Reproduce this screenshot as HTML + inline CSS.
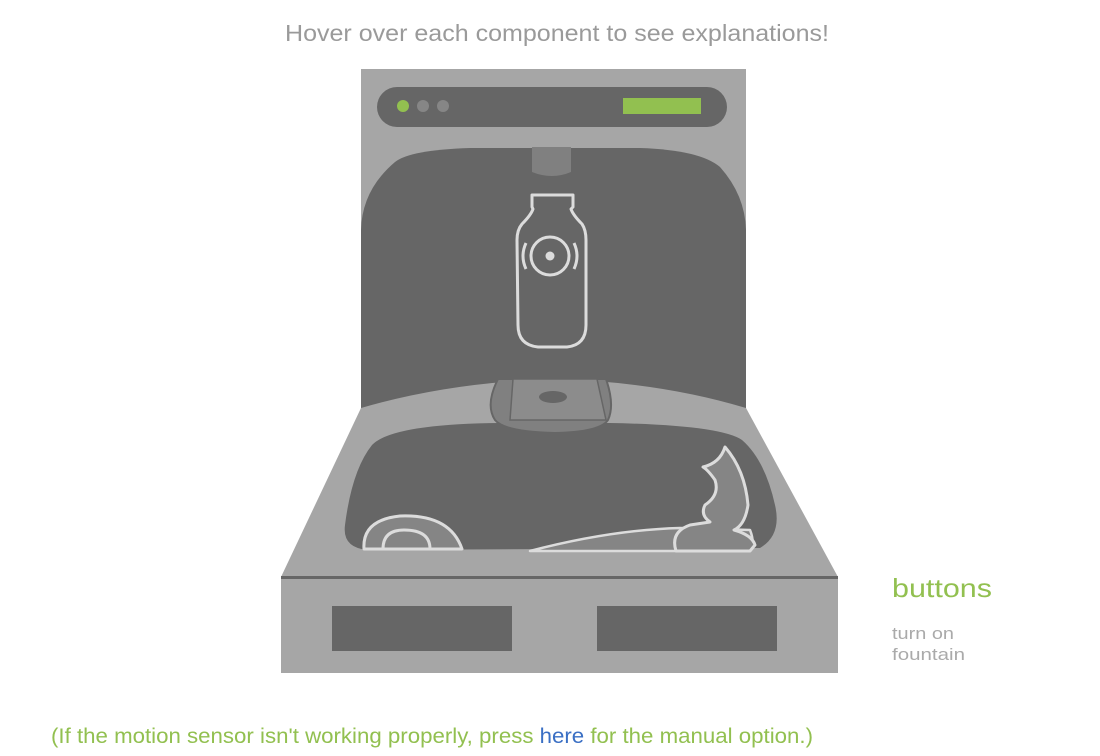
<!DOCTYPE html>
<html><head><meta charset="utf-8"><style>
html,body{margin:0;padding:0;background:#fff;width:1100px;height:756px;overflow:hidden}
svg{display:block}
text{font-family:"Liberation Sans",sans-serif}
</style></head><body>
<svg width="1100" height="756" viewBox="0 0 1100 756" xmlns="http://www.w3.org/2000/svg">
<text x="285" y="41" font-size="23" fill="#9a9a9a" textLength="544" lengthAdjust="spacingAndGlyphs">Hover over each component to see explanations!</text>
<rect x="361" y="69" width="385" height="345" fill="#a6a6a6"/>
<rect x="377" y="87" width="350" height="40" rx="20" fill="#666"/>
<circle cx="403" cy="106" r="6" fill="#92c050"/>
<circle cx="423" cy="106" r="6" fill="#868686"/>
<circle cx="443" cy="106" r="6" fill="#868686"/>
<rect x="623" y="98" width="78" height="16" fill="#92c050"/>
<path d="M361,412 L361,230 Q362,190 395,162 Q410,150 470,148 L640,148 Q700,150 720,167 Q745,195 746,230 L746,412 Z" fill="#666"/>
<path d="M532,147 L571,147 L571,172 Q552,180 532,172 Z" fill="#808080"/>
<g fill="none" stroke="#dcdcdc" stroke-width="3" stroke-linejoin="round">
<path d="M532,195 L573,195 L573,207 L571,209 Q573,215 582,224 Q586,230 586,240 L586,325 Q586,345 567,347 L538,347 Q518,345 518,325 L517,240 Q517,230 522,224 Q531,215 533,209 L532,207 Z"/>
<circle cx="550" cy="256" r="19"/>
<path d="M526,243 Q520,256 526,269"/>
<path d="M574,243 Q580,256 574,269"/>
</g>
<circle cx="550" cy="256" r="4.5" fill="#dcdcdc"/>
<path d="M361,408 Q450,382 555,379 Q660,382 746,408 L838,577 L281,577 Z" fill="#a6a6a6"/>
<path d="M368,550 Q342,548 345,525 Q352,470 372,445 Q392,424 500,423 L610,423 Q720,425 742,440 Q765,460 775,505 Q782,535 760,548 Z" fill="#666"/>
<path d="M498,379 L606,379 Q615,405 608,420 Q600,432 555,433 Q505,432 495,420 Q485,405 498,379 Z" fill="#808080" stroke="#666" stroke-width="2"/>
<path d="M513,379 L597,379 L606,420 L510,420 Z" fill="#8c8c8c" stroke="#666" stroke-width="1.5"/>
<ellipse cx="553" cy="397" rx="14" ry="6" fill="#666"/>
<g fill="#858585" stroke="#dcdcdc" stroke-width="3" stroke-linejoin="round">
<path d="M364,549 Q362,520 400,516 Q450,514 462,549 Z"/>
<path d="M383,549 Q383,530 404,530 Q430,530 430,549" fill="none"/>
<path d="M530,551 Q610,530 680,528 L750,530 Q757,548 745,551 Z" stroke-width="2.5"/>
<path d="M676,551 Q670,532 690,525 L710,522 Q700,515 705,505 Q720,495 715,480 Q708,470 703,467 Q720,463 725,447 Q745,470 748,505 Q745,525 734,530 Q752,535 755,545 L750,551 Z"/>
</g>
<rect x="281" y="576" width="557" height="3" fill="#666"/>
<rect x="281" y="579" width="557" height="94" fill="#a6a6a6"/>
<rect x="332" y="606" width="180" height="45" fill="#666"/>
<rect x="597" y="606" width="180" height="45" fill="#666"/>
<text x="892" y="597" font-size="26" fill="#92c050" textLength="100" lengthAdjust="spacingAndGlyphs">buttons</text>
<text x="892" y="639" font-size="17" fill="#aaa" textLength="62" lengthAdjust="spacingAndGlyphs">turn on</text>
<text x="892" y="660" font-size="17" fill="#aaa" textLength="73" lengthAdjust="spacingAndGlyphs">fountain</text>
<text x="51" y="743" font-size="21" fill="#92c050" textLength="762" lengthAdjust="spacingAndGlyphs">(If the motion sensor isn't working properly, press <tspan fill="#3a6fc4">here</tspan> for the manual option.)</text>
</svg>
</body></html>
